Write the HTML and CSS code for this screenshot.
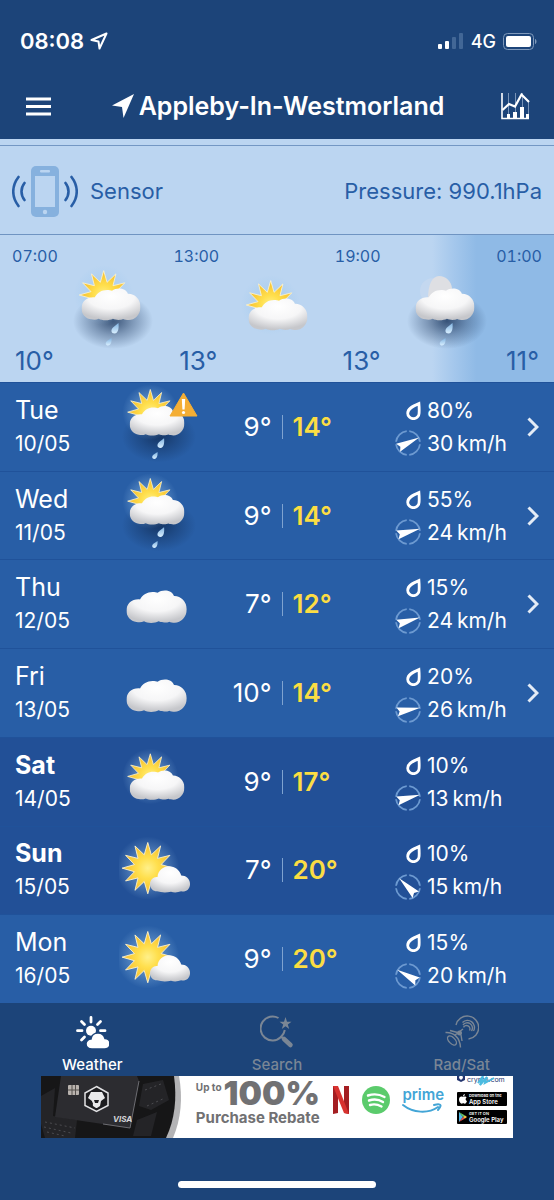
FILE: index.html
```html
<!DOCTYPE html>
<html lang="en">
<head>
    <meta charset="UTF-8">
    <meta name="viewport" content="width=device-width, initial-scale=1">
    <title>Weather - Appleby-In-Westmorland</title>
    <link rel="stylesheet" href="styles.css">
</head>
<body>
    <!-- shared icons -->
    <svg class="sprite" aria-hidden="true">
        <defs>
            <radialGradient id="sunFill">
                <stop offset="0" stop-color="#fff08a"/>
                <stop offset="0.4" stop-color="#ffdf4d"/>
                <stop offset="1" stop-color="#f6bd2c"/>
            </radialGradient>
            <radialGradient id="sunGlow">
                <stop offset="0.4" stop-color="#9cc8ee" stop-opacity="0.45"/>
                <stop offset="1" stop-color="#9cc8ee" stop-opacity="0"/>
            </radialGradient>
            <radialGradient id="cloudFill" cx="0.5" cy="0.25" r="0.72">
                <stop offset="0" stop-color="#ffffff"/>
                <stop offset="0.55" stop-color="#f6f6f7"/>
                <stop offset="1" stop-color="#c6c7cb"/>
            </radialGradient>
            <radialGradient id="rainShadow">
                <stop offset="0" stop-color="#0f2950" stop-opacity="0.75"/>
                <stop offset="0.5" stop-color="#0f2950" stop-opacity="0.35"/>
                <stop offset="1" stop-color="#0f2950" stop-opacity="0"/>
            </radialGradient>
            <linearGradient id="dropFill" x1="0" y1="0" x2="0" y2="1">
                <stop offset="0" stop-color="#7fb2e0"/>
                <stop offset="1" stop-color="#d9efff"/>
            </linearGradient>
        </defs>
        <symbol id="sun" viewBox="-32 -32 64 64">
            <circle r="32" fill="url(#sunGlow)"/>
            <polygon fill="url(#sunFill)" stroke="#fdf3d0" stroke-width="0.9" points="0,-26 3.6,-13.5 13,-22.5 9.9,-9.9 22.5,-13 13.5,-3.6 26,0 13.5,3.6 22.5,13 9.9,9.9 13,22.5 3.6,13.5 0,26 -3.6,13.5 -13,22.5 -9.9,9.9 -22.5,13 -13.5,3.6 -26,0 -13.5,-3.6 -22.5,-13 -9.9,-9.9 -13,-22.5 -3.6,-13.5"/>
        </symbol>
        <symbol id="cloud" viewBox="0 0 60 33">
            <path fill="url(#cloudFill)" d="M10 31.5C4 31 0 26 0 20.5C0 13 6 8.5 13.5 9.2C16 4.5 20.5 1.7 26 1.7C28 1.7 30 2 31 2.5C36-1.2 45-.5 47.3 5.7C54 5.5 60 11 60 19C60 27 54 32.3 48 32.3C46 32.3 44 32 42.5 31.3C40 32.5 35 32.5 32 31C28 33 21 33 17.5 31C15 32.2 12 32 10 31.5Z"/>
        </symbol>
        <symbol id="rain" viewBox="0 0 84 92">
            <ellipse cx="43" cy="56" rx="40" ry="28" fill="url(#rainShadow)"/>
            <path fill="url(#dropFill)" d="M48.5 58C49 62.5 48.5 68.5 44.5 68.5C41 68.5 40.5 65 43 62.5Z"/>
            <path fill="url(#dropFill)" d="M41.5 73C41.8 76 41 80.5 38 80.5C35.500 80.5 35 77.8 37 76Z"/>
        </symbol>
        <symbol id="sun-rain" viewBox="0 0 84 92">
            <use href="#rain" width="84" height="92"/>
            <use href="#sun" x="3.7" y="0" width="60" height="60"/>
            <use href="#cloud" x="11.5" y="23" width="59" height="33"/>
        </symbol>
        <symbol id="sun-cloud" viewBox="0 -10 84 92">
            <use href="#sun" x="3.7" y="0" width="60" height="60"/>
            <use href="#cloud" x="11.5" y="23" width="59" height="33"/>
        </symbol>
        <symbol id="moon-rain" viewBox="0 0 84 92">
            <use href="#rain" width="84" height="92"/>
            <circle cx="29" cy="26" r="13" fill="#cddcf0" opacity="0.5"/>
            <path fill="#dedfe3" d="M24 34C24 20 28 11 35 11C42 11 47 16 48 23L44 34Z"/>
            <use href="#cloud" x="11.5" y="23" width="59" height="33"/>
        </symbol>
        <symbol id="cloudy" viewBox="0 0 84 92">
            <use href="#cloud" x="8" y="31" width="65" height="36"/>
        </symbol>
        <symbol id="sunny" viewBox="0 0 84 92">
            <use href="#sun" x="-3" y="10" width="68" height="68"/>
            <path fill="url(#cloudFill)" d="M41 69C36.5 69 33.5 65.5 33.5 61C33.5 56.5 37 53 41.5 53.5C42 46.5 47.5 42 54 42C60 42 65.5 46 67 52C72 52 76.5 55.5 76.5 61C76.5 67 71.5 70 67 69C63 70.5 59 70.5 56 69.5C51 70.5 46 70.5 41 69Z"/>
        </symbol>
        <symbol id="drop" viewBox="0 0 15 19">
            <path fill="none" stroke="#fff" stroke-width="2.8" stroke-linejoin="miter" d="M12.9 2.6C13.2 6 13.3 9 13.1 12.2A5.7 5.5 0 0 1 1.7 12.2C1.7 7.5 6.5 5.2 12.9 2.6Z"/>
        </symbol>
        <symbol id="ring" viewBox="0 0 26 26">
            <circle cx="13" cy="13" r="12" fill="none" stroke="#6d9ad1" stroke-width="1.8" pathLength="40" stroke-dasharray="8.6 1.4" stroke-dashoffset="-0.7"/>
        </symbol>
        <symbol id="needle" viewBox="0 0 26 26">
            <path fill="#fff" d="M13 0.5L17.5 24L13 21.5L8.5 24Z"/>
        </symbol>
        <symbol id="chevron" viewBox="0 0 12 20">
            <path fill="none" stroke="#e4ecf6" stroke-width="3" d="M1.5 1.5L10 10L1.5 18.5"/>
        </symbol>
    </svg>

    <div class="status-bar">
        <span class="clock">08:08</span>
        <svg class="location" width="18" height="18" viewBox="0 0 18 18"><path fill="none" stroke="#fff" stroke-width="2" stroke-linejoin="round" d="M16.5 1.5L1.5 8L8.5 9.5L9.5 16.5Z"/></svg>
        <svg class="signal" width="26" height="16" viewBox="0 0 26 16">
            <rect x="0" y="11" width="4" height="5" rx="1" fill="#fff"/>
            <rect x="7" y="8" width="4" height="8" rx="1" fill="#fff"/>
            <rect x="14" y="4" width="4" height="12" rx="1" fill="#426796"/>
            <rect x="21" y="0" width="4" height="16" rx="1" fill="#426796"/>
        </svg>
        <span class="network">4G</span>
        <svg width="34" height="17" viewBox="0 0 34 17">
            <rect x="0.5" y="0.5" width="30" height="16" rx="4" fill="none" stroke="#7f99bb"/>
            <rect x="3" y="3" width="25" height="11" rx="2" fill="#fff"/>
            <path d="M32 6C34 6.5 34 10.5 32 11Z" fill="#7f99bb"/>
        </svg>
    </div>

    <header class="header">
        <button class="icon-button" type="button" aria-label="Menu">
            <svg width="25" height="19" viewBox="0 0 25 19"><path stroke="#fff" stroke-width="3" d="M0 2H25M0 9.5H25M0 17H25"/></svg>
        </button>
        <h1 class="title">
            <svg width="22" height="24" viewBox="0 0 22 24"><path fill="#fff" d="M22 0L11.5 24L10 13L0 11.5Z"/></svg>
            Appleby-In-Westmorland
        </h1>
        <button class="icon-button chart" type="button" aria-label="Charts">
            <svg width="30" height="28" viewBox="0 0 30 28">
                <path stroke="#7893b7" stroke-width="1" d="M8.5 1V25M15.5 1V25M22.5 1V25M28.5 8V25"/>
                <path fill="none" stroke="#fff" stroke-width="1.6" d="M2 1V26.5H29"/>
                <path fill="#fff" d="M7 22H10V26H7ZM13 20H17V26H13ZM20 15H24V26H20ZM26 22H29V26H26Z"/>
                <path fill="none" stroke="#fff" stroke-width="2.2" d="M2.5 18L9 12L15 14.5L21.5 2.5L29 10"/>
            </svg>
        </button>
    </header>

    <main>
        <div class="strip"></div>
        <section class="sensor">
            <svg width="66" height="51" viewBox="0 0 66 51">
                <rect x="19" y="0" width="28" height="51" rx="5" fill="#86b1de"/>
                <rect x="23" y="10" width="20" height="31" fill="#bbd5f1"/>
                <rect x="28" y="4" width="10" height="2.5" rx="1" fill="#bbd5f1"/>
                <circle cx="33" cy="46" r="2.2" fill="#bbd5f1"/>
                <g fill="none" stroke="#285ea6" stroke-width="2.6" stroke-linecap="round">
                    <path d="M6.5 11C-0.5 20 -0.5 31 6.5 40M12.5 17C8.5 22 8.5 29 12.5 34"/>
                    <path d="M59.5 11C66.5 20 66.5 31 59.5 40M53.5 17C57.5 22 57.5 29 53.5 34"/>
                </g>
            </svg>
            <span>Sensor</span>
            <span class="pressure">Pressure: 990.1hPa</span>
        </section>

        <section class="today">
            <div class="hours">
                <span>07:00</span>
                <span>13:00</span>
                <span>19:00</span>
                <span>01:00</span>
            </div>
            <div class="hour-icons">
                <svg width="84" height="92"><use href="#sun-rain"/></svg>
                <svg width="84" height="92"><use href="#sun-cloud"/></svg>
                <svg width="84" height="92"><use href="#moon-rain"/></svg>
            </div>
            <div class="hour-temps">
                <span>10°</span>
                <span>13°</span>
                <span>13°</span>
                <span>11°</span>
            </div>
        </section>

        <ul class="forecast">
            <li>
                <a class="day" href="#tue">
                    <div class="date"><strong>Tue</strong><span>10/05</span></div>
                    <div class="sky">
                        <svg width="78" height="86"><use href="#sun-rain"/></svg>
                        <svg class="warning" width="29" height="25" viewBox="0 0 29 25"><path fill="#f4ae35" stroke="#f4ae35" stroke-linejoin="round" d="M14.5 1L28 24H1Z"/><path fill="#fff" d="M12.8 7H16.2L15.6 17.5H13.4Z"/><circle cx="14.5" cy="20.5" r="1.6" fill="#fff"/></svg>
                    </div>
                    <div class="temps"><span>9°</span><b>14°</b></div>
                    <div class="stats">
                        <svg width="15" height="19"><use href="#drop"/></svg><span>80%</span>
                        <svg width="26" height="26" viewBox="0 0 26 26"><use href="#ring"/><use href="#needle" transform="rotate(64 13 13)"/></svg><span>30&thinsp;km/h</span>
                    </div>
                    <svg width="12" height="20"><use href="#chevron"/></svg>
                </a>
            </li>
            <li>
                <a class="day" href="#wed">
                    <div class="date"><strong>Wed</strong><span>11/05</span></div>
                    <div class="sky"><svg width="78" height="86"><use href="#sun-rain"/></svg></div>
                    <div class="temps"><span>9°</span><b>14°</b></div>
                    <div class="stats">
                        <svg width="15" height="19"><use href="#drop"/></svg><span>55%</span>
                        <svg width="26" height="26" viewBox="0 0 26 26"><use href="#ring"/><use href="#needle" transform="rotate(75 13 13)"/></svg><span>24&thinsp;km/h</span>
                    </div>
                    <svg width="12" height="20"><use href="#chevron"/></svg>
                </a>
            </li>
            <li>
                <a class="day" href="#thu">
                    <div class="date"><strong>Thu</strong><span>12/05</span></div>
                    <div class="sky"><svg width="78" height="86"><use href="#cloudy"/></svg></div>
                    <div class="temps"><span>7°</span><b>12°</b></div>
                    <div class="stats">
                        <svg width="15" height="19"><use href="#drop"/></svg><span>15%</span>
                        <svg width="26" height="26" viewBox="0 0 26 26"><use href="#ring"/><use href="#needle" transform="rotate(74 13 13)"/></svg><span>24&thinsp;km/h</span>
                    </div>
                    <svg width="12" height="20"><use href="#chevron"/></svg>
                </a>
            </li>
            <li>
                <a class="day" href="#fri">
                    <div class="date"><strong>Fri</strong><span>13/05</span></div>
                    <div class="sky"><svg width="78" height="86"><use href="#cloudy"/></svg></div>
                    <div class="temps"><span>10°</span><b>14°</b></div>
                    <div class="stats">
                        <svg width="15" height="19"><use href="#drop"/></svg><span>20%</span>
                        <svg width="26" height="26" viewBox="0 0 26 26"><use href="#ring"/><use href="#needle" transform="rotate(80 13 13)"/></svg><span>26&thinsp;km/h</span>
                    </div>
                    <svg width="12" height="20"><use href="#chevron"/></svg>
                </a>
            </li>
            <li class="weekend">
                <div class="day">
                    <div class="date"><strong>Sat</strong><span>14/05</span></div>
                    <div class="sky"><svg width="78" height="86"><use href="#sun-cloud"/></svg></div>
                    <div class="temps"><span>9°</span><b>17°</b></div>
                    <div class="stats">
                        <svg width="15" height="19"><use href="#drop"/></svg><span>10%</span>
                        <svg width="26" height="26" viewBox="0 0 26 26"><use href="#ring"/><use href="#needle" transform="rotate(75 13 13)"/></svg><span>13&thinsp;km/h</span>
                    </div>
                </div>
            </li>
            <li class="weekend">
                <div class="day">
                    <div class="date"><strong>Sun</strong><span>15/05</span></div>
                    <div class="sky"><svg width="78" height="86"><use href="#sunny"/></svg></div>
                    <div class="temps"><span>7°</span><b>20°</b></div>
                    <div class="stats">
                        <svg width="15" height="19"><use href="#drop"/></svg><span>10%</span>
                        <svg width="26" height="26" viewBox="0 0 26 26"><use href="#ring"/><use href="#needle" transform="rotate(-45 13 13)"/></svg><span>15&thinsp;km/h</span>
                    </div>
                </div>
            </li>
            <li>
                <div class="day">
                    <div class="date"><strong>Mon</strong><span>16/05</span></div>
                    <div class="sky"><svg width="78" height="86"><use href="#sunny"/></svg></div>
                    <div class="temps"><span>9°</span><b>20°</b></div>
                    <div class="stats">
                        <svg width="15" height="19"><use href="#drop"/></svg><span>15%</span>
                        <svg width="26" height="26" viewBox="0 0 26 26"><use href="#ring"/><use href="#needle" transform="rotate(-60 13 13)"/></svg><span>20&thinsp;km/h</span>
                    </div>
                </div>
            </li>
        </ul>
    </main>

    <footer class="footer">
        <nav class="tabs">
            <a class="tab active" href="#weather">
                <svg width="34" height="34" viewBox="0 0 34 34">
                    <circle cx="16" cy="15.7" r="5" fill="#fff"/>
                    <path stroke="#fff" stroke-width="2.8" stroke-linecap="round" d="M16 2.5V7M25.5 6.5L22.5 9.5M25.5 15.7H30M2.5 15.7H7M6.5 6.5L9.5 9.5M6.5 25L9.5 22"/>
                    <path fill="#fff" stroke="#1c4479" stroke-width="1.5" d="M17 34C13 34 11 31.5 11 28.8C11 26 13.5 24 16 24C16.5 20.5 19.5 18 23 18C26.5 18 29 20 30 23.5C33 23.5 35 26 35 28.8C35 32 32.5 34 29.5 34Z"/>
                </svg>
                Weather
            </a>
            <a class="tab" href="#search">
                <svg width="34" height="34" viewBox="0 0 34 34">
                    <path fill="none" stroke="#7a8695" stroke-width="2" d="M18.5 3A12 12 0 1 0 21 22C23 20 24.3 18 24.8 15"/>
                    <path fill="#7a8695" d="M25.500 2L27 6.700H31.500L27.800 9.500L29.200 14L25.500 11.200L21.800 14L23.200 9.500L19.500 6.700H24Z"/>
                    <path stroke="#7a8695" stroke-width="2" d="M20.5 21L24 24.5"/>
                    <path stroke="#7a8695" stroke-width="4.5" stroke-linecap="round" d="M24 24L30.5 30"/>
                </svg>
                Search
            </a>
            <a class="tab" href="#radsat">
                <svg width="34" height="34" viewBox="0 0 34 34">
                    <g fill="none" stroke="#7a8695" stroke-width="1.4">
                        <path d="M11 10A11.5 11.5 0 1 1 23.5 24M17.5 7.5A7 7 0 0 1 28.5 16M18 10A5 5 0 0 1 26.5 16M18.5 12.3A3 3 0 0 1 24.5 15.5"/>
                        <path d="M0.5 17.5C8 17 15 22 15.5 32.5M5 15.5L12.5 17.5M16 20L17 26M10 20L18 14"/>
                        <ellipse cx="7" cy="25.5" rx="5.5" ry="3" transform="rotate(45 7 25.5)"/>
                    </g>
                    <circle cx="14.5" cy="18" r="2.5" fill="#7a8695"/>
                </svg>
                Rad/Sat
            </a>
        </nav>

        <a class="ad" href="#ad">
            <svg width="142" height="62" viewBox="0 0 142 62">
                <path fill="#b3b3b5" d="M0 0H138C142 22 140 43 132 62H0Z"/>
                <path fill="#161617" d="M0 0H133C136 22 134 43 125 62H0Z"/>
                <path fill="#242427" d="M0 20L14 12L12 40L36 44L34 62H4L0 48ZM102 8L122 4L128 24L110 34L98 30ZM96 44L116 36L110 60H92Z"/>
                <path stroke="#4c4c50" stroke-width="1" stroke-dasharray="2 3" fill="none" d="M4 46L34 52M3 51L30 57M6 56L24 60M106 30L124 22M104 14L120 8"/>
                <path fill="#2c2c30" d="M20 0H96L98 5L89 52L14 41Z"/>
                <path fill="none" stroke="#6d6d72" d="M98 5L89 52L62 48"/>
                <rect x="27" y="9" width="11" height="10" rx="1" fill="#b9b3ae"/>
                <path stroke="#55504d" d="M31 9V19M34.5 9V19M27 14H38"/>
                <path fill="#1d1d20" stroke="#e2e2e4" stroke-width="1.5" d="M55.5 10.5L67 17V29.5L55.5 35.5L44 29.5V17Z"/>
                <path fill="#e9e9ea" d="M50 16H61L64 22L60 25L59 30L56 32H55L52 30L51 25L47 22Z"/>
                <path fill="#1d1d20" d="M53 24H58L57 27H54ZM48 24L52 27L51 30Z"/>
                <text class="visa" x="72" y="46">VISA</text>
            </svg>
            <span class="offer">
                <span class="offer-top"><small>Up to</small><b>100%</b></span>
                <span class="offer-bottom">Purchase Rebate</span>
            </span>
            <svg class="logo" width="16" height="28" viewBox="0 0 16 28">
                <path fill="#a41e22" d="M0 0H5V27L0 28ZM11 0H16V28L11 27Z"/>
                <path fill="#d8322f" d="M0 0H5L16 28L11 27Z"/>
            </svg>
            <svg class="logo" width="28" height="28" viewBox="0 0 28 28">
                <circle cx="14" cy="14" r="14" fill="#5bcb6c"/>
                <path fill="none" stroke="#fff" stroke-width="2.4" stroke-linecap="round" d="M6 9.5C12 7.5 18 8.5 22.5 11M7 14.5C12 12.8 17 13.5 21 16M8 19C12 17.8 16 18.5 19.5 20.5"/>
            </svg>
            <span class="prime logo">prime
                <svg width="40" height="11" viewBox="0 0 40 11"><path fill="none" stroke="#43a5d6" stroke-width="2" stroke-linecap="round" d="M1 2C11 10 26 11 36 4M32 2C36 1 39 1 38.5 3C38 5 37 6 36 7"/></svg>
            </span>
            <span class="stores">
                <span class="brand"><svg width="8" height="8" viewBox="0 0 8 8"><path fill="#24366f" d="M4 0L8 2V6L4 8L0 6V2Z"/><path fill="#fff" d="M2.5 2H5.5L6 4L4 6L2 4Z"/></svg>crypto.com<svg class="scribble" width="18" height="10" viewBox="0 0 18 10"><path fill="none" stroke="#4bbbe0" stroke-width="2" d="M1 7L6 0L3 9L10 1L8 7L17 2"/></svg></span>
                <span class="badge">
                    <svg width="8" height="10" viewBox="0 0 8 10"><path fill="#fff" d="M4 3C5.5 2 7 2.5 7.5 3.5C6 4.5 6.5 6.5 8 7C7.5 8.5 6.5 10 5.5 9.7C4.5 9.2 4 9.2 3 9.7C1.5 10 0 7.5 0 5.5C0 3 2 2 4 3ZM4 2.4C4 1 4.8 0.2 5.8 0C6 1.4 5 2.4 4 2.4Z"/></svg>
                    <span><small>Download on the</small>App Store</span>
                </span>
                <span class="badge">
                    <svg width="8" height="10" viewBox="0 0 8 10"><path fill="#4fb8e8" d="M0 0L4 5L0 10Z"/><path fill="#65c466" d="M0 0L6 3.5L4 5Z"/><path fill="#e9504a" d="M0 10L6 6.5L4 5Z"/><path fill="#f7c545" d="M6 3.5L8 5L6 6.5L4 5Z"/></svg>
                    <span><small>GET IT ON</small>Google Play</span>
                </span>
            </span>
        </a>
        <div class="home-indicator"></div>
    </footer>
</body>
</html>
```

FILE: styles.css
```css
* {
    box-sizing: border-box;
}
body {
    display: flex;
    flex-direction: column;
    min-height: 100vh;
    margin: 0;
    background: #1c4479;
    color: #fff;
    font-family: Inter, "Liberation Sans", sans-serif;
}
a {
    color: inherit;
    text-decoration: none;
}
svg {
    display: block;
    flex: none;
}
.sprite {
    position: absolute;
    width: 0;
    height: 0;
}

/* top bars */
.status-bar {
    display: flex;
    align-items: center;
    height: 73px;
    padding: 20px 17px 11px 20px;
}
.clock {
    font-size: 22px;
    font-weight: 600;
}
.location {
    margin-left: 6px;
}
.signal {
    margin-left: auto;
}
.network {
    margin: 0 7px;
    font-size: 18px;
    font-weight: 500;
}
.header {
    display: grid;
    grid-template-columns: 1fr auto 1fr;
    align-items: center;
    height: 66px;
    padding: 0 24px 0 26px;
}
.icon-button {
    justify-self: start;
    padding: 0;
    border: 0;
    background: none;
    cursor: pointer;
}
.icon-button.chart {
    justify-self: end;
}
.title {
    display: flex;
    align-items: center;
    gap: 5px;
    margin: 0;
    font-size: 25px;
    font-weight: 600;
    white-space: nowrap;
}

/* sensor and today */
main {
    display: flex;
    flex: 1;
    flex-direction: column;
    background: #bbd5f1;
    color: #285ea6;
}
.strip {
    height: 7px;
    border-bottom: 1px solid #7397c4;
}
.sensor {
    display: flex;
    align-items: center;
    gap: 12px;
    height: 89px;
    padding: 2px 12px 0;
    border-bottom: 1px solid #6f94c2;
    font-size: 22px;
}
.pressure {
    margin-left: auto;
}
.today {
    padding: 11px 0 6px;
    background: linear-gradient(to right, #bbd5f1 78%, #a4c7ec 82%, #8fbae6 86%);
}
.hours,
.hour-temps {
    display: flex;
    justify-content: space-between;
    padding: 0 12px;
    font-size: 16px;
    font-variant-numeric: tabular-nums;
    line-height: 20px;
}
.hour-icons {
    display: flex;
    justify-content: space-around;
    margin: -1px 0 -11px;
    padding: 0 25px 0 29px;
}
.hour-temps {
    padding: 0 15px;
    font-size: 26px;
    font-variant-numeric: normal;
    line-height: 30px;
}

/* days */
.forecast {
    display: flex;
    flex: 1;
    flex-direction: column;
    margin: 0;
    padding: 0;
    background: #285ea6;
    color: #fff;
    list-style: none;
}
.forecast li {
    display: flex;
    flex: 1;
    border-top: 1px solid #20529a;
}
.forecast .weekend {
    background: #225097;
}
.day {
    display: grid;
    flex: 1;
    grid-template-columns: 20% 17% 28% 1fr 27px;
    align-items: center;
}
.date {
    display: flex;
    flex-direction: column;
    padding-left: 15px;
    font-size: 21px;
    line-height: 33px;
}
.date strong {
    font-size: 25px;
    font-weight: 400;
}
.weekend strong {
    font-weight: 700;
}
.sky {
    position: relative;
    justify-self: center;
}
.warning {
    position: absolute;
    top: 8px;
    right: -1px;
}
.temps {
    display: grid;
    grid-template-columns: 1fr 1fr;
    font-size: 26px;
    line-height: 24px;
}
.temps span {
    padding-right: 10px;
    border-right: 1px solid #7fa3d0;
    text-align: right;
}
.temps b {
    padding-left: 10px;
    color: #fbdd43;
    font-weight: 600;
}
.stats {
    display: grid;
    grid-template-columns: 27px auto;
    column-gap: 6px;
    align-items: center;
    justify-content: start;
    justify-items: end;
    padding-left: 34px;
    font-size: 21px;
    line-height: 33px;
}
.stats span {
    justify-self: start;
    white-space: nowrap;
}

/* tabs and ad */
.tabs {
    display: flex;
    padding: 12px 0 2px;
}
.tab {
    display: flex;
    flex: 1;
    flex-direction: column;
    align-items: center;
    gap: 7px;
    color: #7a8695;
    font-size: 15px;
    font-weight: 500;
    line-height: 18px;
}
.tab.active {
    color: #fff;
}
.ad {
    display: flex;
    align-items: center;
    justify-content: space-between;
    max-width: 472px;
    height: 62px;
    margin: 0 auto;
    padding-right: 6px;
    overflow: hidden;
    background: #fff;
    color: #717173;
}
.visa {
    fill: #d5d5d8;
    font-size: 8px;
    font-style: italic;
    font-weight: 700;
}
.offer {
    display: flex;
    flex-direction: column;
    padding-bottom: 10px;
    font-weight: 700;
    white-space: nowrap;
}
.offer-top {
    display: flex;
    gap: 2px;
    font-size: 33px;
    line-height: 32px;
}
.offer-top small {
    font-size: 10px;
    line-height: 20px;
}
.offer-bottom {
    font-size: 15px;
    line-height: 18px;
}
.logo {
    margin-bottom: 14px;
}
.prime {
    color: #43a5d6;
    font-size: 15px;
    font-weight: 600;
    line-height: 16px;
}
.stores {
    display: flex;
    flex-direction: column;
    gap: 4px;
    align-self: flex-start;
    width: 50px;
}
.brand {
    position: relative;
    display: flex;
    gap: 2px;
    height: 12px;
    color: #24366f;
    font-size: 7px;
    line-height: 8px;
}
.brand svg {
    margin-top: -2px;
}
.scribble {
    position: absolute;
    top: 2px;
    left: 20px;
}
.badge {
    display: flex;
    align-items: center;
    gap: 2px;
    height: 14px;
    padding: 0 2px;
    border-radius: 1px;
    background: #000;
    color: #fff;
    font-size: 6px;
    font-weight: 600;
    line-height: 7px;
    white-space: nowrap;
}
.badge small {
    display: block;
    font-size: 4px;
    line-height: 4px;
}
.home-indicator {
    width: 198px;
    height: 7px;
    margin: 43px auto 12px;
    border-radius: 4px;
    background: #fff;
}
```
